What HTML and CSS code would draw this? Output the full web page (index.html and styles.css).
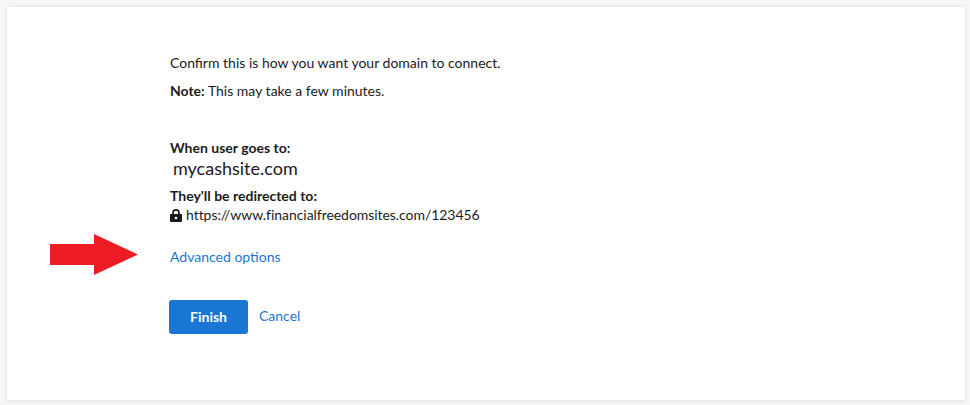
FILE: index.html
```html
<!DOCTYPE html>
<html lang="en">
<head>
    <meta charset="UTF-8">
    <meta name="viewport" content="width=device-width, initial-scale=1.0">
    <title>Confirm domain connection</title>
    <link rel="stylesheet" href="styles.css">
</head>
<body>
    <div class="card">
        <p class="intro">Confirm this is how you want your domain to connect.</p>
        <p class="note"><strong>Note:</strong> This may take a few minutes.</p>

        <p class="label">When user goes to:</p>
        <p class="domain">mycashsite.com</p>
        <p class="label label-redirect">They'll be redirected to:</p>
        <p class="target">
            <svg class="lock" viewBox="0 0 12 13" width="12" height="13" aria-hidden="true">
                <path fill="#1b1b1b" fill-rule="evenodd" d="M2.2 5V3.8a3.8 3.8 0 0 1 7.6 0V5h1.2a1 1 0 0 1 1 1v6a1 1 0 0 1-1 1H1a1 1 0 0 1-1-1V6a1 1 0 0 1 1-1zm1.7 0h4.2V3.8a2.1 2.1 0 0 0-4.2 0zM6 7.7a1.3 1.3 0 1 0 0 2.6 1.3 1.3 0 0 0 0-2.6z"/>
            </svg>
            https://www.financialfreedomsites.com/123456
        </p>

        <div class="advanced">
            <!-- Red arrow pointing at the link -->
            <svg class="arrow" viewBox="0 0 88 41" width="88" height="41" aria-hidden="true">
                <polygon fill="#ed1c24" points="0,10 44,10 44,0 88,20.5 44,41 44,31 0,31"/>
            </svg>
            <a href="#">Advanced options</a>
        </div>

        <div class="actions">
            <button class="finish">Finish</button>
            <a class="cancel" href="#">Cancel</a>
        </div>
    </div>
</body>
</html>
```
FILE: styles.css
```css
body {
    margin: 0;
    height: 405px;
    padding: 7px 5px 5px 7px;
    box-sizing: border-box;
    overflow: hidden;
    background-color: #f6f6f6;
    font-family: Lato, Arial, sans-serif;
    font-size: 14px;
    color: #1b1b1b;
}

.card {
    height: 393px;
    box-sizing: border-box;
    padding: 46px 0 0 163px;
    background: #fff;
    box-shadow: 0 0 4px rgba(0, 0, 0, 0.12);
}

p {
    margin: 0;
    line-height: 20px;
}

.note {
    margin-top: 8px;
}

.label {
    margin-top: 37px;
    font-weight: 700;
}

.domain {
    padding-left: 3px;
    font-size: 18px;
    line-height: 20px;
}

.label-redirect {
    margin-top: 8px;
}

.target {
    display: flex;
    align-items: center;
    gap: 4px;
    margin-top: -1px;
    letter-spacing: -0.05px;
}

a {
    color: #1976d2;
    text-decoration: none;
}

.advanced {
    position: relative;
    margin-top: 22px;
    line-height: 20px;
}

.arrow {
    position: absolute;
    left: -120px;
    top: -13px;
}

.actions {
    display: flex;
    align-items: center;
    gap: 11px;
    margin-top: 33px;
    margin-left: -1px;
}

.finish {
    width: 79px;
    height: 34px;
    padding: 0 0 2px;
    border: none;
    border-radius: 3px;
    background-color: #1976d2;
    color: #fff;
    font-family: inherit;
    font-size: 14px;
    font-weight: 700;
}

.cancel {
    margin-bottom: 3px;
}
```
